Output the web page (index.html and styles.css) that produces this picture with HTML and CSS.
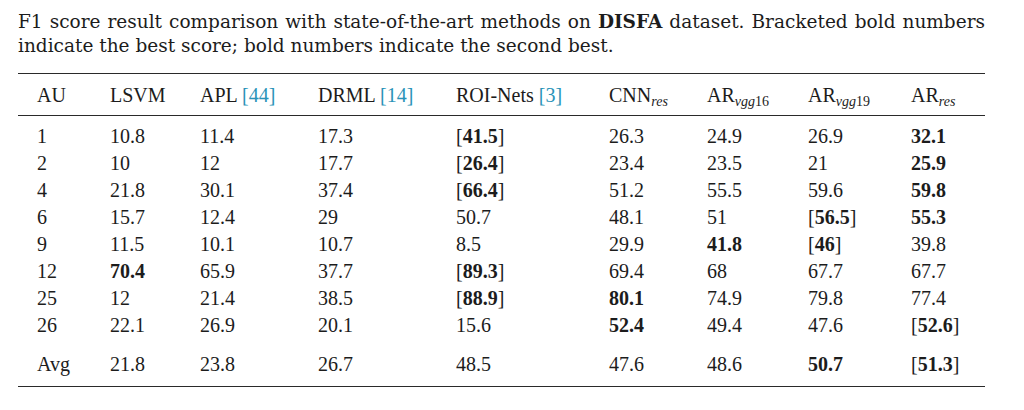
FILE: index.html
```html
<!DOCTYPE html>
<html>
<head>
<meta charset="utf-8">
<link rel="stylesheet" href="styles.css">
</head>
<body>
<div class="page">
  <p class="caption">F1 score result comparison with state-of-the-art methods on <b>DISFA</b> dataset. Bracketed bold numbers indicate the best score; bold numbers indicate the second best.</p>
  <table class="results">
    <colgroup>
      <col class="c-au"><col class="c-lsvm"><col class="c-apl"><col class="c-drml"><col class="c-roi"><col class="c-cnn"><col class="c-ar16"><col class="c-ar19"><col class="c-arres">
    </colgroup>
    <thead>
      <tr>
        <th>AU</th><th>LSVM</th><th>APL <span class="ref">[44]</span></th><th>DRML <span class="ref">[14]</span></th><th>ROI-Nets <span class="ref">[3]</span></th>
        <th>CNN<sub><i>res</i></sub></th><th>AR<sub><i>vgg</i>16</sub></th><th>AR<sub><i>vgg</i>19</sub></th><th>AR<sub><i>res</i></sub></th>
      </tr>
    </thead>
    <tbody>
      <tr class="first"><td>1</td><td>10.8</td><td>11.4</td><td>17.3</td><td>[<b>41.5</b>]</td><td>26.3</td><td>24.9</td><td>26.9</td><td><b>32.1</b></td></tr>
      <tr><td>2</td><td>10</td><td>12</td><td>17.7</td><td>[<b>26.4</b>]</td><td>23.4</td><td>23.5</td><td>21</td><td><b>25.9</b></td></tr>
      <tr><td>4</td><td>21.8</td><td>30.1</td><td>37.4</td><td>[<b>66.4</b>]</td><td>51.2</td><td>55.5</td><td>59.6</td><td><b>59.8</b></td></tr>
      <tr><td>6</td><td>15.7</td><td>12.4</td><td>29</td><td>50.7</td><td>48.1</td><td>51</td><td>[<b>56.5</b>]</td><td><b>55.3</b></td></tr>
      <tr><td>9</td><td>11.5</td><td>10.1</td><td>10.7</td><td>8.5</td><td>29.9</td><td><b>41.8</b></td><td>[<b>46</b>]</td><td>39.8</td></tr>
      <tr><td>12</td><td><b>70.4</b></td><td>65.9</td><td>37.7</td><td>[<b>89.3</b>]</td><td>69.4</td><td>68</td><td>67.7</td><td>67.7</td></tr>
      <tr><td>25</td><td>12</td><td>21.4</td><td>38.5</td><td>[<b>88.9</b>]</td><td><b>80.1</b></td><td>74.9</td><td>79.8</td><td>77.4</td></tr>
      <tr><td>26</td><td>22.1</td><td>26.9</td><td>20.1</td><td>15.6</td><td><b>52.4</b></td><td>49.4</td><td>47.6</td><td>[<b>52.6</b>]</td></tr>
      <tr class="avg"><td>Avg</td><td>21.8</td><td>23.8</td><td>26.7</td><td>48.5</td><td>47.6</td><td>48.6</td><td><b>50.7</b></td><td>[<b>51.3</b>]</td></tr>
    </tbody>
  </table>
</div>
</body>
</html>
```
FILE: styles.css
```css
html, body {
  margin: 0;
  padding: 0;
  background: #ffffff;
}

.page {
  width: 967px;
  padding: 10px 0 0 18px;
  color: #1c1c1c;
}

.caption {
  margin: 0;
  font-family: "DejaVu Serif", serif;
  font-size: 18.5px;
  line-height: 24px;
  text-align: justify;
}

.caption b {
  font-weight: bold;
}

.results {
  margin-top: 15px;
  width: 967px;
  border-collapse: collapse;
  table-layout: fixed;
  font-family: "Liberation Serif", "Times New Roman", serif;
  font-size: 20px;
  color: #1c1c1c;
  border-top: 1.5px solid #2a2a2a;
  border-bottom: 1.5px solid #2a2a2a;
}

.c-au { width: 92px; }
.c-lsvm { width: 90px; }
.c-apl { width: 118px; }
.c-drml { width: 138px; }
.c-roi { width: 153px; }
.c-cnn { width: 98px; }
.c-ar16 { width: 101px; }
.c-ar19 { width: 103px; }
.c-arres { width: 74px; }

.results th,
.results td {
  text-align: left;
  padding: 0;
  white-space: nowrap;
}

.results th:first-child,
.results td:first-child {
  padding-left: 19px;
}

.results thead th {
  font-weight: normal;
  height: 41px;
  line-height: 24px;
  border-bottom: 1.5px solid #2a2a2a;
  vertical-align: middle;
}

.results sub {
  font-size: 14px;
  line-height: 0;
  vertical-align: -4px;
}

.results .ref {
  color: #2a93b8;
}

.results tbody td {
  height: 27px;
  line-height: 27px;
}

.results tbody tr.first td {
  padding-top: 7px;
}

.results tbody tr.avg td {
  padding-top: 12px;
  padding-bottom: 8px;
}
```
